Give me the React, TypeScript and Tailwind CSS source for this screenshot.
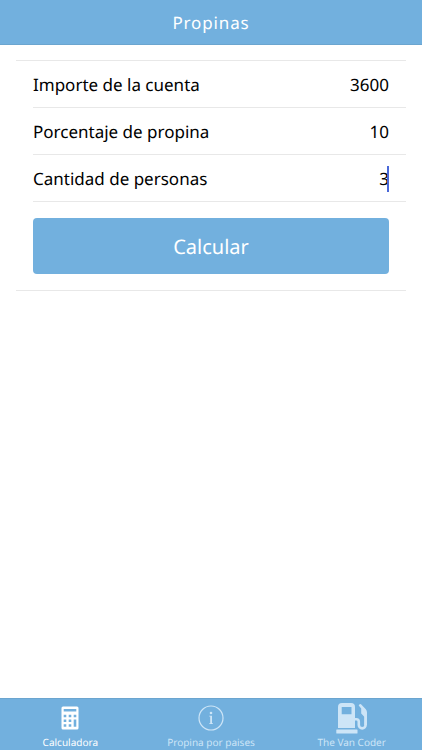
import { useState } from "react";

function CalculatorIcon() {
    return (
        <svg width="18" height="24" viewBox="0 0 18 24" aria-hidden="true">
            <path
                fill="currentColor"
                fillRule="evenodd"
                d="M2 .5h14A1.500 1.500 0 0 1 17.500 2v20a1.500 1.500 0 0 1-1.500 1.500H2A1.500 1.500 0 0 1 .5 22V2A1.500 1.500 0 0 1 2 .5ZM2.700 3v2.500h12.600V3ZM2.700 8.800v2.500h2.600V8.800ZM7.700 8.800v2.500h2.600V8.800ZM12.700 8.800v2.500h2.600V8.800ZM2.700 13.500v2.500h2.600v-2.500ZM7.700 13.500v2.500h2.600v-2.500ZM12.700 13.500v7.300h2.600v-7.300ZM2.700 18.300v2.500h2.600v-2.500ZM7.700 18.300v2.500h2.600v-2.500Z"
            />
        </svg>
    );
}

function InfoIcon() {
    return (
        <svg width="26" height="26" viewBox="0 0 26 26" aria-hidden="true">
            <circle
                cx="13"
                cy="13"
                r="12"
                fill="none"
                stroke="currentColor"
                strokeWidth="1.200"
            />
            <circle cx="13" cy="8" r="1.300" fill="currentColor" />
            <path
                fill="currentColor"
                d="M11.200 10.700h2.800v7.500h1v.9h-3.800v-.9h1v-6.600h-1Z"
            />
        </svg>
    );
}

function FuelIcon() {
    return (
        <svg width="32" height="32" viewBox="0 0 32 32" aria-hidden="true">
            <path
                fill="currentColor"
                fillRule="evenodd"
                d="M6 1h9a4 4 0 0 1 4 4v21H2V5A4 4 0 0 1 6 1ZM5.700 5v7.300h9.800V5Z"
            />
            <rect x="0.300" y="27.600" width="21.200" height="3.800" rx="0.500" fill="currentColor" />
            <path
                fill="none"
                stroke="currentColor"
                strokeWidth="2.600"
                strokeLinejoin="round"
                d="M18 17.200h2.300a2.500 2.500 0 0 1 2.500 2.500v3.300a3.400 3.400 0 0 0 6.800 0V14"
            />
            <path
                fill="currentColor"
                d="M22.700 3.600Q23.300 1.500 25 2.200L29.800 7.200Q31 8.500 31 10.500L30.900 23H28.300L28.500 15L25.200 11.500V6.500Z"
            />
        </svg>
    );
}

const fields = [
    { id: "amount", label: "Importe de la cuenta", initial: "3600" },
    { id: "percentage", label: "Porcentaje de propina", initial: "10" },
    { id: "people", label: "Cantidad de personas", initial: "3" },
];

const tabs = [
    { label: "Calculadora", icon: <CalculatorIcon />, active: true },
    { label: "Propina por paises", icon: <InfoIcon />, active: false },
    { label: "The Van Coder", icon: <FuelIcon />, active: false },
];

export default function App() {
    const [values, setValues] = useState<Record<string, string>>({
        amount: fields[0].initial,
        percentage: fields[1].initial,
        people: fields[2].initial,
    });
    const [current, setCurrent] = useState("people");

    return (
        <div className="flex min-h-screen flex-col bg-white font-['Noto_Sans',sans-serif] [text-rendering:geometricPrecision]">
            <header className="flex h-[45px] items-center justify-center border-b border-[#6ba5cf] bg-[#72b0de] pt-[2px] text-white">
                <h1 className="text-[17px] leading-6 tracking-wider">Propinas</h1>
            </header>

            <main className="flex-1 px-4 pt-[15px]">
                <form
                    onSubmit={(e) => e.preventDefault()}
                    className="border-y border-[#e8e8e8] pl-[17px]"
                >
                    {fields.map((field) => (
                        <div
                            key={field.id}
                            className="flex h-[47px] items-center border-b border-[#e8e8e8] pt-[2px] pr-[17px] text-[17px] leading-[26px] text-black"
                        >
                            <label htmlFor={field.id} className="shrink-0">
                                {field.label}
                            </label>
                            <div className="relative min-w-0 flex-1">
                                <input
                                    id={field.id}
                                    type="text"
                                    inputMode="numeric"
                                    value={values[field.id]}
                                    onFocus={() => setCurrent(field.id)}
                                    onChange={(e) =>
                                        setValues({
                                            ...values,
                                            [field.id]: e.target.value,
                                        })
                                    }
                                    className="block w-full text-right caret-transparent outline-none [text-rendering:geometricPrecision]"
                                />
                                {current === field.id ? (
                                    <span className="absolute inset-y-0 right-0 w-[2px] bg-[#4a68d8]" />
                                ) : (
                                    ""
                                )}
                            </div>
                        </div>
                    ))}
                    <div className="py-4 pr-[17px]">
                        <button
                            type="submit"
                            className="h-14 w-full cursor-pointer rounded bg-[#72b0de] pt-[2px] text-xl text-white [text-rendering:geometricPrecision]"
                        >
                            Calcular
                        </button>
                    </div>
                </form>
            </main>

            <nav className="grid h-[52px] grid-cols-3 border-t border-[#6ba5cf] bg-[#72b0de]">
                {tabs.map((tab) => (
                    <a
                        key={tab.label}
                        href="#"
                        aria-current={tab.active ? "page" : undefined}
                        className={
                            tab.active
                                ? "flex flex-col items-center text-white"
                                : "flex flex-col items-center text-[#cde5f7]"
                        }
                    >
                        <span className="flex h-9 items-center pt-[2px]">
                            {tab.icon}
                        </span>
                        <span className="text-[10px] leading-[14px]">
                            {tab.label}
                        </span>
                    </a>
                ))}
            </nav>
        </div>
    );
}
